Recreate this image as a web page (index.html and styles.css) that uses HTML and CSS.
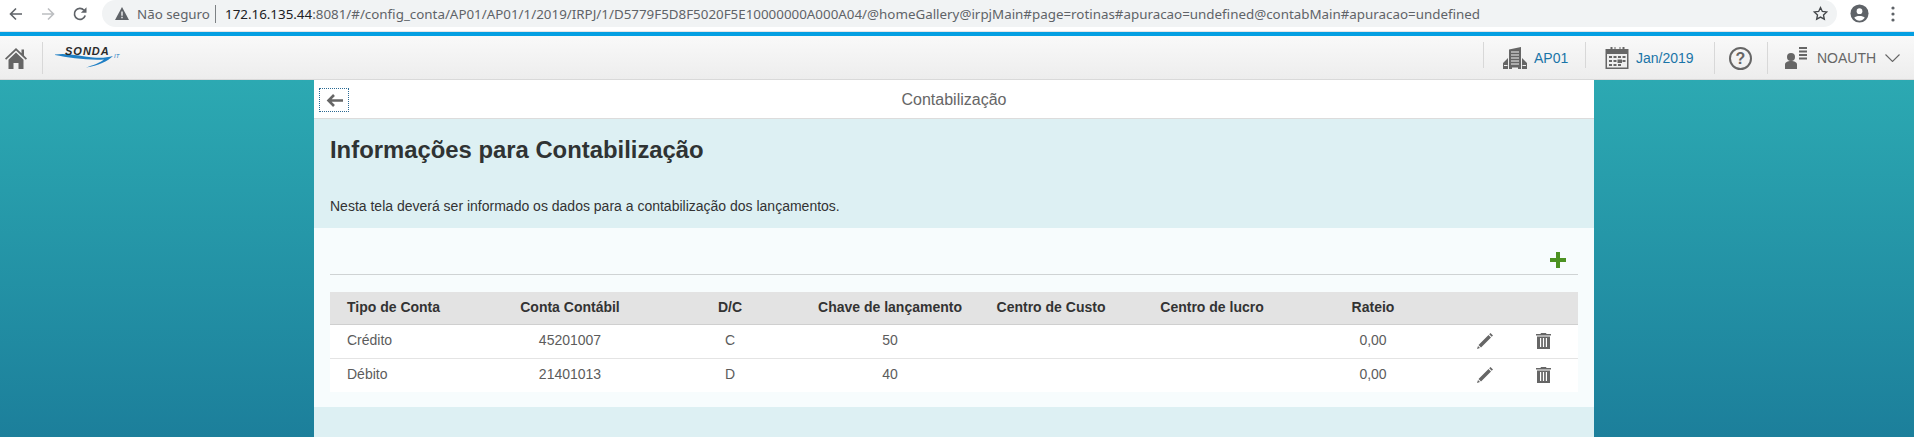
FILE: index.html
```html
<!DOCTYPE html>
<html lang="pt-BR">
<head>
<meta charset="utf-8">
<title>Contabilização</title>
<link rel="stylesheet" href="styles.css">
</head>
<body>
<div class="browser">
  <svg class="nav-ico" viewBox="0 0 16 16"><path d="M14 8H3M8 2.500 2.500 8 8 13.500" fill="none" stroke="#5f6368" stroke-width="1.600"/></svg>
  <svg class="nav-ico" viewBox="0 0 16 16"><path d="M2 8h11M8 2.500 13.500 8 8 13.500" fill="none" stroke="#bcbec1" stroke-width="1.600"/></svg>
  <svg class="nav-ico" viewBox="0 0 16 16"><path d="M13.200 9.500A5.500 5.500 0 1 1 12 4.200" fill="none" stroke="#5f6368" stroke-width="1.700"/><path d="M14.500 1.200v5.600H8.900z" fill="#5f6368"/></svg>
  <div class="omni">
    <svg class="warn" viewBox="0 0 14 13"><path d="M7 0 14 13H0z" fill="#5f6368"/><path d="M6.300 4.500h1.400v4.300H6.300zM6.300 9.800h1.400v1.400H6.300z" fill="#f1f3f4"/></svg>
    <span class="insecure">Não seguro</span>
    <span class="omni-sep"></span>
    <span class="url"><b>172.16.135.44</b>:8081/#/config_conta/AP01/AP01/1/2019/IRPJ/1/D5779F5D8F5020F5E10000000A000A04/@homeGallery@irpjMain#page=rotinas#apuracao=undefined@contabMain#apuracao=undefined</span>
    <svg class="star" viewBox="0 0 24 24"><path d="M12 3.500l2.600 5.600 6.100.7-4.500 4.200 1.200 6L12 17l-5.400 3 1.200-6-4.500-4.200 6.100-.7z" fill="none" stroke="#44474a" stroke-width="1.900"/></svg>
  </div>
  <svg class="acct" viewBox="0 0 20 20"><circle cx="10" cy="10" r="9.500" fill="#5f6368"/><circle cx="10" cy="7.500" r="3" fill="#fff"/><path d="M4.500 14.500c1.500-2.500 9.500-2.500 11 0-1.500 2-3.500 3-5.500 3s-4-1-5.500-3z" fill="#fff"/></svg>
  <svg class="dots" viewBox="0 0 4 16"><circle cx="2" cy="2" r="1.600" fill="#5f6368"/><circle cx="2" cy="8" r="1.600" fill="#5f6368"/><circle cx="2" cy="14" r="1.600" fill="#5f6368"/></svg>
</div>
<div class="blue-line"></div>
<header class="topbar">
  <svg class="home" viewBox="0 0 22 21"><path d="M11 0 0 10.500l1.200 1.200L11 2.400l9.800 9.300 1.200-1.200-3-2.900V1.500h-2.500v3.800z" fill="#666"/><path d="M3.500 11.700 11 4.600l7.500 7.100V21h-5v-6h-5v6h-5z" fill="#666"/></svg>
  <div class="logo">
    <svg class="swoosh" viewBox="0 0 64 16"><path d="M0 2.500C12 .5 24 4 38 5.500c8 .8 14 .2 20-1.500-5 5-15 10-27 11.500 6-2 15-5 18-8-16 1-36-2-49-4.500z" fill="#1f7fc4"/></svg>
    <span class="logo-text">SONDA</span>
    <span class="logo-it">IT</span>
  </div>
  <div class="tools">
    <div class="tool tool-short tool-ap">
      <svg class="tool-ico" viewBox="0 0 24 22"><path d="M6 22V2.500L18 0v22h-3v-1.500H9V22z" fill="#666"/><path d="M0 22v-6l5-5v11zM19 11l5 5v6h-5z" fill="#666"/><path d="M8 4.500h8v1H8zM8 7.500h8v1H8zM8 10.500h8v1H8zM8 13.500h8v1H8zM8 16.500h8v1H8zM1 18h3.500v1H1zM19.500 18H23v1h-3.500z" fill="#f1f1f1"/></svg>
      <span class="tool-link">AP01</span>
    </div>
    <div class="tool tool-short tool-date">
      <svg class="tool-ico" viewBox="0 0 23 22"><path d="M0 2h23v20H0z" fill="#666"/><path d="M1.500 7h20v13.500h-20z" fill="#efefef"/><path d="M5 0h2v4.500H5zM9 0h1v4.500H9zM14 0h1v4.500h-1zM17 0h2v4.500h-2z" fill="#666"/><path d="M3.500 9h3v2h-3zM8 9h3v2H8zM12.500 9h3v2h-3zM17 9h3v2h-3zM3.500 13h3v2h-3zM8 13h3v2H8zM12 12.500h4.500v3.500H12zM17 13h3v2h-3zM3.500 17h3v2h-3zM8 17h3v2H8zM12.500 17h3v2h-3z" fill="#666"/></svg>
      <span class="tool-link">Jan/2019</span>
    </div>
    <div class="tool tool-help">
      <span class="help">?</span>
    </div>
    <div class="tool tool-user">
      <svg class="tool-ico" viewBox="0 0 22 22"><circle cx="6" cy="10" r="4" fill="#666"/><path d="M0 22v-4.500c0-2 2.500-3.500 6-3.500s6 1.500 6 3.500V22z" fill="#666"/><path d="M14 0h8v2h-8zM14 3.500h8v2h-8zM14 7h8v2h-8zM14 10.500h8v2h-8z" fill="#666"/></svg>
      <span class="user-name">NOAUTH</span>
      <svg class="chev" viewBox="0 0 15 8"><path d="M.5.500 7.500 7.500 14.500.5" fill="none" stroke="#666" stroke-width="1.100"/></svg>
    </div>
  </div>
</header>
<div class="stage">
  <main class="page">
    <div class="titlebar">
      <button class="back" type="button" aria-label="Voltar">
        <svg viewBox="0 0 17 13"><path d="M17 6.500H4M8 1 2.500 6.500 8 12" fill="none" stroke="#666" stroke-width="2.600"/></svg>
      </button>
      <span class="page-title">Contabilização</span>
    </div>
    <section class="intro">
      <h1>Informações para Contabilização</h1>
      <p>Nesta tela deverá ser informado os dados para a contabilização dos lançamentos.</p>
    </section>
    <section class="panel">
      <div class="actions">
        <svg class="plus" viewBox="0 0 16 16"><path d="M6 0h4v6h6v4h-6v6H6v-6H0V6h6z" fill="#4c9222"/></svg>
      </div>
      <div class="grid grid-head">
        <span class="left">Tipo de Conta</span><span>Conta Contábil</span><span>D/C</span><span>Chave de lançamento</span><span>Centro de Custo</span><span>Centro de lucro</span><span>Rateio</span><span></span><span></span>
      </div>
      <div class="grid grid-row grid-row-first">
        <span class="left">Crédito</span><span>45201007</span><span>C</span><span>50</span><span></span><span></span><span>0,00</span>
        <span><svg class="pencil" viewBox="0 0 16 16"><use href="#ico-pencil"/></svg></span>
        <span><svg class="trash" viewBox="0 0 15 16"><use href="#ico-trash"/></svg></span>
      </div>
      <div class="grid grid-row">
        <span class="left">Débito</span><span>21401013</span><span>D</span><span>40</span><span></span><span></span><span>0,00</span>
        <span><svg class="pencil" viewBox="0 0 16 16"><use href="#ico-pencil"/></svg></span>
        <span><svg class="trash" viewBox="0 0 15 16"><use href="#ico-trash"/></svg></span>
      </div>
    </section>
  </main>
</div>
<svg class="defs" width="0" height="0">
  <defs>
    <symbol id="ico-pencil" viewBox="0 0 16 16"><path d="M13.500 0 16 2.500 14.700 3.800 12.200 1.300zM11.500 2 14 4.500 4 14.500 1.500 12zM1 13l2 2-3 1z" fill="#666"/></symbol>
    <symbol id="ico-trash" viewBox="0 0 15 16"><path d="M5 0h5l.5 1H15v1.500H0V1h4.500z" fill="#666"/><path d="M1 3.500h13V16H1zM4 5v9h1.200V5zM6.900 5v9h1.200V5zM9.800 5v9H11V5z" fill="#666" fill-rule="evenodd"/></symbol>
  </defs>
</svg>
</body>
</html>
```
FILE: styles.css
```css
* { box-sizing: border-box; }
html, body { margin: 0; padding: 0; height: 100%; }
body {
  font-family: "Liberation Sans", Arial, sans-serif;
  font-size: 14px;
  color: #333;
  display: flex;
  flex-direction: column;
  overflow: hidden;
  background: #fff;
}
.browser {
  height: 32px;
  flex: none;
  display: flex;
  align-items: flex-start;
  background: #fff;
  border-bottom: 1px solid #e3e5e8;
  padding-left: 8px;
}
.nav-ico { width: 16px; height: 16px; margin: 6px 16px 0 0; flex: none; }
.omni {
  flex: none;
  width: 1735px;
  height: 27px;
  margin-left: -2px;
  padding: 0 8px 0 13px;
  background: #f1f3f4;
  border-radius: 14px;
  display: flex;
  align-items: center;
  font-family: "Noto Sans", sans-serif;
  font-size: 13.36px;
  color: #5f6368;
  white-space: nowrap;
}
.warn { width: 14px; height: 13px; flex: none; margin-right: 8px; }
.insecure { width: 71px; flex: none; }
.omni-sep { width: 1px; height: 18px; background: #7d8184; margin: 0 9px 0 7px; flex: none; }
.url { flex: none; }
.url b { font-weight: 400; color: #202124; }
.star { width: 17px; height: 17px; margin-left: auto; flex: none; }
.acct { width: 19px; height: 19px; margin: 4px 0 0 13px; flex: none; }
.dots { width: 4px; height: 16px; margin: 6px 0 0 22px; flex: none; }
.blue-line { height: 4px; flex: none; background: #049fe2; }
.topbar {
  height: 44px;
  flex: none;
  display: flex;
  align-items: flex-start;
  background: linear-gradient(#f9f9f9, #ededed);
  border-bottom: 1px solid #d9d9d9;
}
.home { width: 22px; height: 21px; margin: 12px 0 0 5px; flex: none; }
.logo {
  margin: 6px 0 0 15px;
  border-left: 1px solid #d8d8d8;
  width: 90px;
  height: 32px;
  position: relative;
  flex: none;
}
.logo-text {
  position: absolute;
  left: 22px;
  top: 3px;
  font-size: 11px;
  line-height: 13px;
  font-weight: 700;
  font-style: italic;
  letter-spacing: 1px;
  color: #2a2a2a;
}
.logo-it {
  position: absolute;
  left: 71px;
  top: 11px;
  font-size: 6px;
  line-height: 7px;
  font-style: italic;
  color: #1f7fc4;
}
.swoosh { position: absolute; left: 12px; top: 10px; width: 64px; height: 16px; }
.tools { margin-left: auto; display: flex; height: 100%; align-items: flex-start; }
.tool {
  display: flex;
  align-items: center;
  height: 32px;
  margin-top: 6px;
  border-left: 1px solid #d8d8d8;
  flex: none;
}
.tool-short { height: 26px; align-items: flex-start; }
.tool-ap { width: 102px; padding-left: 19px; }
.tool-date { width: 129px; padding-left: 19px; }
.tool-help { width: 53px; padding-left: 14px; }
.tool-user { width: 147px; padding-left: 17px; }
.tool-ico { width: 24px; height: 22px; flex: none; }
.tool-short .tool-ico { margin-top: 5px; }
.tool-user .tool-ico { width: 22px; }
.tool-link { margin-left: 7px; margin-top: 8px; color: #1a75a8; font-size: 14px; line-height: 16px; }
.help {
  width: 23px;
  height: 23px;
  border: 2px solid #666;
  border-radius: 50%;
  color: #666;
  font-weight: 700;
  font-size: 16px;
  line-height: 19px;
  text-align: center;
}
.user-name { margin-left: 10px; color: #666; font-size: 14px; }
.chev { width: 15px; height: 8px; margin-left: 9px; flex: none; }
.stage {
  flex: 1;
  display: flex;
  background: linear-gradient(#2ca9b2, #1c7f9b);
  min-height: 0;
  padding-left: 314px;
}
.page { width: 1280px; background: #ddf0f3; }
.titlebar {
  height: 39px;
  background: #fff;
  border-bottom: 1px solid #dcdcdc;
  display: flex;
  align-items: center;
  justify-content: center;
  position: relative;
}
.back {
  position: absolute;
  left: 5px;
  top: 8px;
  width: 30px;
  height: 24px;
  padding: 0;
  background: #fff;
  border: 1px dotted #2b6a93;
  display: flex;
  align-items: center;
  justify-content: center;
}
.back svg { width: 17px; height: 13px; }
.page-title { font-size: 16px; color: #666; padding-top: 2px; }
.intro { height: 109px; padding: 17px 16px 0; }
.intro h1 {
  margin: 0;
  font-size: 23.85px;
  line-height: 27px;
  font-weight: 700;
  color: #2f3333;
}
.intro p { margin: 33px 0 0; font-size: 14px; line-height: 20px; color: #333; }
.panel { height: 179px; background: #f7fcfd; padding: 0 16px; }
.actions {
  height: 47px;
  border-bottom: 1px solid #cfd3d4;
  display: flex;
  justify-content: flex-end;
  align-items: flex-start;
  padding: 24px 12px 0 0;
  margin-bottom: 17px;
}
.plus { width: 16px; height: 16px; }
.grid {
  display: grid;
  grid-template-columns: 160px 160px 160px 160px 162px 160px 162px 62px 54px 8px;
  align-items: center;
  text-align: center;
}
.grid .left { text-align: left; padding-left: 17px; }
.grid-head {
  height: 33px;
  padding-bottom: 2px;
  background: #e3e3e3;
  border-bottom: 1px solid #cfcfcf;
  font-weight: 700;
  color: #333;
}
.grid-row {
  height: 33px;
  padding-bottom: 4px;
  background: #fff;
  color: #5c5c5c;
}
.grid-row-first { height: 34px; border-bottom: 1px solid #e4e4e4; }
.pencil, .trash { display: block; margin: 2px auto 0; }
.pencil { width: 16px; height: 16px; }
.trash { width: 15px; height: 16px; }
.defs { position: absolute; }
```
